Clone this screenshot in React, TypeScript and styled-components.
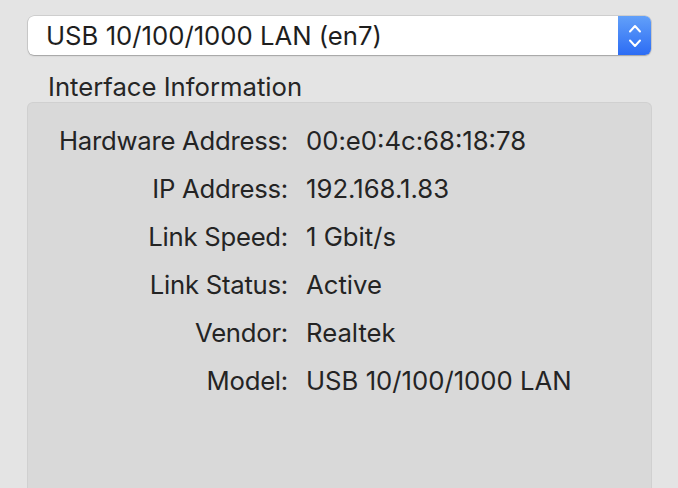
import React from "react";
import styled, { createGlobalStyle } from "styled-components";

const Global = createGlobalStyle`
  html, body { margin: 0; padding: 0; background: #e4e4e4; }
  body { font-family: Inter, "Noto Sans", sans-serif; color: #242424; }
`;

const Page = styled.div`
  width: 678px;
  height: 488px;
  overflow: hidden;
  padding: 16px 26px 0 27px;
  box-sizing: border-box;
  display: flex;
  flex-direction: column;
`;

const Popup = styled.div`
  display: flex;
  height: 39px;
  margin: 0 1px 0 1px;
  border-radius: 6px;
  background: #fff;
  box-shadow: 0 0 0 0.5px rgba(0,0,0,0.18), 0 1px 1.5px rgba(0,0,0,0.22);
  overflow: hidden;
`;

const PopupText = styled.div`
  flex: 1;
  display: flex;
  align-items: center;
  padding-left: 18px;
  font-size: 25.7px;
  color: #1e1e1e;
`;

const Stepper = styled.div`
  width: 33px;
  display: flex;
  align-items: center;
  justify-content: center;
  background: linear-gradient(#62a0f9, #2c6cf4);
`;

const Title = styled.div`
  margin: 17px 0 0 21px;
  font-size: 25.7px;
  line-height: 30px;
  color: #262626;
`;

const Box = styled.div`
  flex: 1;
  background: #d9d9d9;
  border: 1px solid #d0d0d0;
  border-bottom: none;
  border-radius: 6px 6px 0 0;
  padding-top: 14px;
  display: grid;
  grid-template-columns: 260px 1fr;
  grid-auto-rows: 48px;
  column-gap: 18px;
  align-content: start;
`;

const Label = styled.div`
  text-align: right;
  font-size: 25.7px;
  letter-spacing: -0.25px;
  line-height: 48px;
`;

const Value = styled.div`
  font-size: 25.7px;
  line-height: 48px;
  white-space: nowrap;
`;

const rows: [string, string][] = [
  ["Hardware Address:", "00:e0:4c:68:18:78"],
  ["IP Address:", "192.168.1.83"],
  ["Link Speed:", "1 Gbit/s"],
  ["Link Status:", "Active"],
  ["Vendor:", "Realtek"],
  ["Model:", "USB 10/100/1000 LAN"],
];

export default function App() {
  return (
    <>
      <Global />
      <Page>
        <Popup>
          <PopupText>USB 10/100/1000 LAN (en7)</PopupText>
          <Stepper>
            <svg width="14" height="24" viewBox="0 0 14 24" fill="none" stroke="#fff" strokeWidth="2" strokeLinecap="round" strokeLinejoin="round">
              <path d="M2 7.5 L7 2 L12 7.5" />
              <path d="M2 16.5 L7 22 L12 16.5" />
            </svg>
          </Stepper>
        </Popup>
        <Title>Interface Information</Title>
        <Box>
          {rows.map(([l, v]) => (
            <React.Fragment key={l}>
              <Label>{l}</Label>
              <Value>{v}</Value>
            </React.Fragment>
          ))}
        </Box>
      </Page>
    </>
  );
}
